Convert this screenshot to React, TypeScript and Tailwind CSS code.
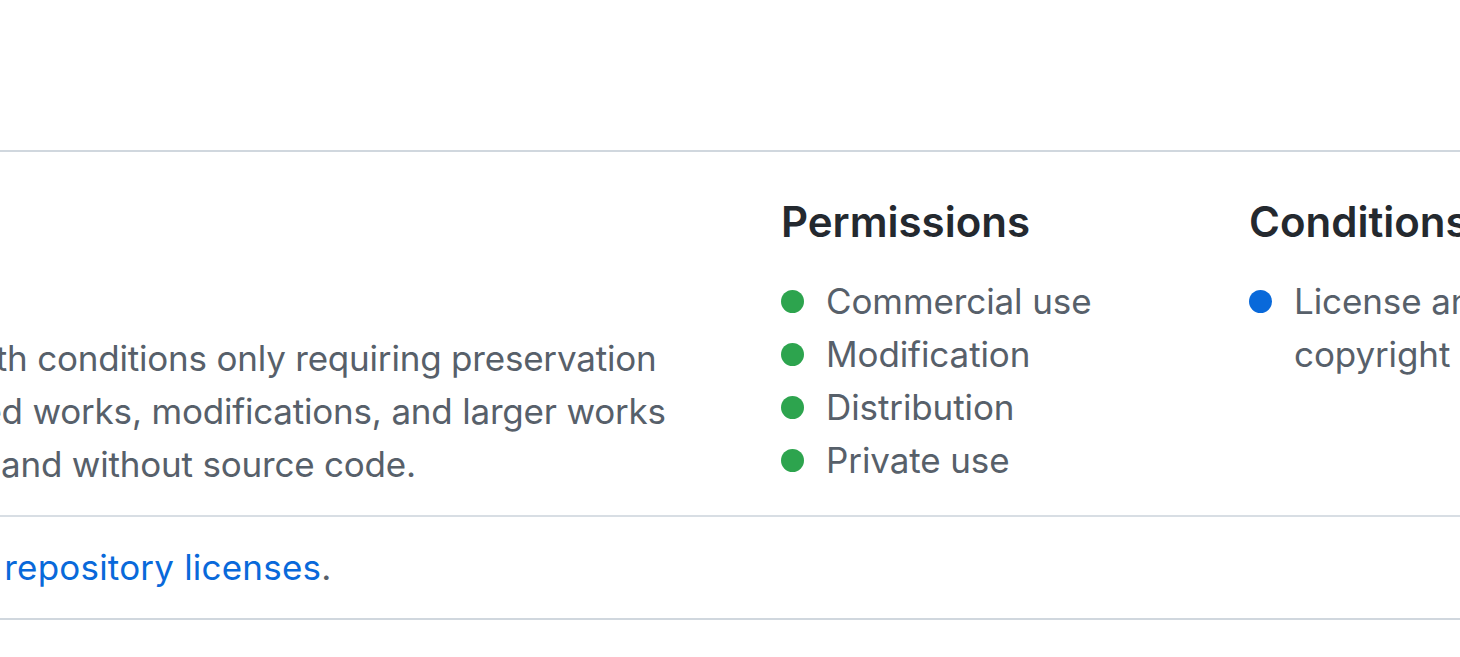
export default function App() {
  const permissions = ["Commercial use", "Modification", "Distribution", "Private use"]

  return (
    <div className="h-[657px] w-[1460px] overflow-hidden bg-white font-['Inter','Noto_Sans',sans-serif] text-[#57606a]">
      <div className="h-[150px]" />

      {/* LICENSE BOX */}
      <div className="border-y-2 border-[#d0d7de]">
        <div className="flex border-b-2 border-[#d8dee4] pt-[44px] pb-[24px]">
          {/* left: name + description, mostly out of view */}
          <div className="w-[781px] shrink-0 overflow-hidden">
            <div className="ml-[-668px] whitespace-nowrap">
              <h3 className="text-[42px] leading-[52px] font-semibold text-[#24292f]">MIT License</h3>
              <div className="mt-[84px] text-[35px] leading-[53px] tracking-[-0.2px]">
                <div>A short and simple permissive license with conditions only requiring preservation</div>
                <div>of copyright and license notices. Licensed works, modifications, and larger works</div>
                <div>may be distributed under different terms and without source code.</div>
              </div>
            </div>
          </div>

          {/* permissions */}
          <div className="w-[468px] shrink-0">
            <h3 className="text-[42px] leading-[52px] font-semibold text-[#24292f]">Permissions</h3>
            <ul className="mt-[27px] text-[35px] leading-[53px] tracking-[-0.1px]">
              {permissions.map((p) => (
                <li key={p} className="flex items-center gap-[22px]">
                  <span className="h-[23px] w-[23px] shrink-0 rounded-full bg-[#2da44e]" />
                  {p}
                </li>
              ))}
            </ul>
          </div>

          {/* conditions */}
          <div className="w-[420px] shrink-0">
            <h3 className="text-[42px] leading-[52px] font-semibold text-[#24292f] whitespace-nowrap">Conditions</h3>
            <ul className="mt-[27px] text-[35px] leading-[53px] tracking-[-0.1px]">
              <li className="flex items-start gap-[22px]">
                <span className="mt-[15px] h-[23px] w-[23px] shrink-0 rounded-full bg-[#0969da]" />
                <span className="w-[300px]">License and copyright notice</span>
              </li>
            </ul>
          </div>
        </div>

        {/* FOOTER */}
        <div className="overflow-hidden pt-[24px] pb-[24px]">
          <p className="ml-[-688px] whitespace-nowrap text-[35px] leading-[53px] tracking-[-0.2px]">
            This is not legal advice. Learn more about{" "}
            <a href="#" className="text-[#0969da] tracking-[0.2px]">repository licenses</a>.
          </p>
        </div>
      </div>
    </div>
  )
}
